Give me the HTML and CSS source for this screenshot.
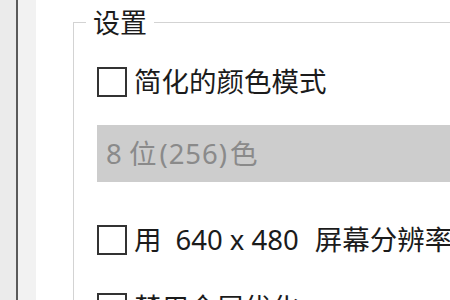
FILE: index.html
```html
<!DOCTYPE html>
<html lang="zh-CN">
<head>
<meta charset="utf-8">
<title>设置</title>
<link rel="stylesheet" href="styles.css">
</head>
<body>
<div class="window">
  <div class="edge"></div>
  <div class="divider"></div>
  <div class="gutter"></div>
  <div class="panel">
    <fieldset class="group">
      <legend class="group-title">设置</legend>
      <div class="rows">
        <label class="check-row row-1"><span class="box"></span><span class="label">简化的颜色模式</span></label>
        <div class="select-disabled">8 位<span class="num">(256)</span>色</div>
        <label class="check-row row-2"><span class="box"></span><span class="label">用<span class="latin">640 x 480</span>屏幕分辨率运行</span></label>
        <label class="check-row row-3"><span class="box"></span><span class="label">禁用全屏优化</span></label>
      </div>
    </fieldset>
  </div>
</div>
</body>
</html>
```
FILE: styles.css
```css
html, body {
  margin: 0;
  padding: 0;
  width: 450px;
  height: 300px;
  overflow: hidden;
  background: #ffffff;
  font-family: "Noto Sans", "Noto Sans CJK SC", sans-serif;
  color: #1b1b1b;
}
.window {
  display: flex;
  height: 300px;
  width: 450px;
  overflow: hidden;
}
.edge {
  width: 16px;
  flex: none;
  background: #ebebeb;
}
.divider {
  width: 2px;
  flex: none;
  background: #5a5a5a;
}
.gutter {
  width: 18px;
  flex: none;
  background: #f2f2f2;
}
.panel {
  flex: 1;
  background: #ffffff;
  padding-left: 37px;
  min-width: 0;
}
.group {
  margin: 8px 0 0 0;
  width: 600px;
  border: 1px solid #d3d3d3;
  border-right: none;
  border-bottom: none;
  padding: 0;
  min-height: 400px;
}
.group-title {
  margin-left: 12px;
  padding: 0 7px;
  font-family: "Noto Sans CJK SC", sans-serif;
  font-size: 27px;
  line-height: 28px;
  color: #1b1b1b;
}
.rows {
  display: flex;
  flex-direction: column;
  padding: 31px 0 0 23px;
}
.check-row {
  display: flex;
  align-items: center;
  height: 30px;
  white-space: nowrap;
}
.box {
  width: 26px;
  height: 26px;
  flex: none;
  border: 2px solid #333333;
  background: #ffffff;
}
.label {
  margin-left: 7px;
  font-size: 27.5px;
  line-height: 30px;
  color: #1b1b1b;
}
.latin {
  padding: 0 16px 0 14px;
}
.select-disabled {
  margin-top: 28px;
  height: 57px;
  background: #cdcdcd;
  color: #8a8a8a;
  font-size: 27.5px;
  line-height: 57px;
  padding-left: 9px;
  white-space: nowrap;
}
.num {
  padding: 0 2px 0 3px;
  letter-spacing: 1px;
}
.row-2 {
  margin-top: 43px;
}
.row-3 {
  margin-top: 38px;
}
```
